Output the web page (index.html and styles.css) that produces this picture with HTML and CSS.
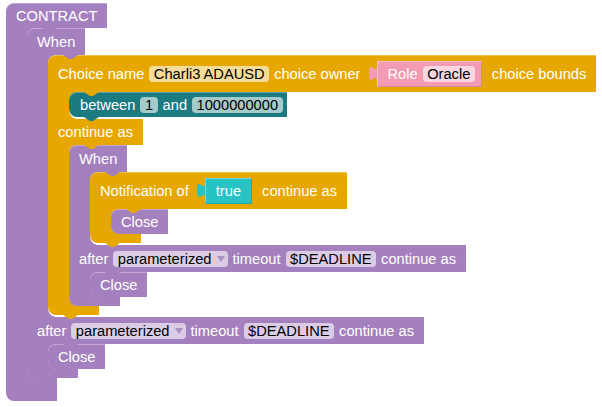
FILE: index.html
```html
<!DOCTYPE html>
<html>
<head>
<meta charset="utf-8">
<link rel="stylesheet" href="styles.css">
</head>
<body>
<svg class="grid" width="602" height="407"><defs><pattern id="g" width="20" height="20" patternUnits="userSpaceOnUse"><path d="M6 2.5h3M7.5 1v3" stroke="#cfcfcf" stroke-width="1"/></pattern></defs><rect width="602" height="407" fill="url(#g)"/></svg>
<div class="ws">
 <div class="blk purple">
  <div class="row head hat"><span>CONTRACT</span></div>
  <div class="stmt">
   <div class="arm"></div>
   <div class="blk purple sb">
    <div class="row head when"><span>When</span></div>
    <div class="stmt">
     <div class="arm"></div>
     <div class="blk yellow sb nx">
      <div class="row head tall">
       <span>Choice name</span><span class="fld">Charli3 ADAUSD</span><span>choice owner</span>
       <span class="val role"><svg class="tab" width="8" height="15" viewBox="0 0 8 15"><path d="M8 0C8 10 0 -8 0 7.5C0 23 8 5 8 15Z"/></svg><span>Role</span><span class="fld">Oracle</span></span>
       <span>choice bounds</span>
      </div>
      <div class="stmt">
       <div class="arm"></div>
       <div class="blk teal sb nx">
        <div class="row head one bnd"><span>between</span><span class="fld">1</span><span>and</span><span class="fld">1000000000</span></div>
       </div>
      </div>
      <div class="row cont"><span>continue as</span></div>
      <div class="stmt">
       <div class="arm"></div>
       <div class="blk purple sb">
        <div class="row head when"><span>When</span></div>
        <div class="stmt">
         <div class="arm"></div>
         <div class="blk yellow sb nx">
          <div class="row head tall">
           <span>Notification of</span>
           <span class="val bool"><svg class="tab" width="8" height="15" viewBox="0 0 8 15"><path d="M8 0C8 10 0 -8 0 7.5C0 23 8 5 8 15Z"/></svg><span>true</span></span>
           <span>continue as</span>
          </div>
          <div class="stmt">
           <div class="arm"></div>
           <div class="blk purple sb"><div class="row head one close"><span>Close</span></div></div>
          </div>
          <div class="foot"></div>
         </div>
        </div>
        <div class="row after"><span>after</span><span class="fld dd">parameterized<svg class="arr" width="8" height="6" viewBox="0 0 8 6"><path d="M0 0H8L4 6Z"/></svg></span><span>timeout</span><span class="fld">$DEADLINE</span><span>continue as</span></div>
        <div class="stmt">
         <div class="arm"></div>
         <div class="blk purple sb"><div class="row head one close"><span>Close</span></div></div>
        </div>
        <div class="foot"></div>
       </div>
      </div>
      <div class="foot"></div>
     </div>
    </div>
    <div class="row after"><span>after</span><span class="fld dd">parameterized<svg class="arr" width="8" height="6" viewBox="0 0 8 6"><path d="M0 0H8L4 6Z"/></svg></span><span>timeout</span><span class="fld">$DEADLINE</span><span>continue as</span></div>
    <div class="stmt">
     <div class="arm"></div>
     <div class="blk purple sb"><div class="row head one close"><span>Close</span></div></div>
    </div>
    <div class="foot"></div>
   </div>
  </div>
  <div class="foot big"></div>
 </div>
</div>
</body>
</html>
```

FILE: styles.css
```css
* { box-sizing: border-box; }
html, body { margin: 0; padding: 0; background: #fff; }
body {
  width: 602px; height: 407px; overflow: hidden; position: relative;
  font-family: "Liberation Sans", Arial, sans-serif; font-size: 14.67px;
}
.grid { position: absolute; left: 0; top: 0; z-index: -1; }
.ws { padding: 3px 0 0 6px; }

.purple { --c: #a580be; }
.yellow { --c: #e6a800; }
.teal { --c: #1c7b81; }

.blk { display: flex; flex-direction: column; align-items: flex-start; position: relative; flex-shrink: 0; }
.row {
  display: flex; align-items: center; gap: 5px; flex-shrink: 0;
  background: var(--c); color: #fff; height: 26px; padding: 0 10px;
  white-space: nowrap; position: relative;
}
.head { border-top-left-radius: 8px; box-shadow: inset 0 1px 0 rgba(255,255,255,.3); }
.hat { height: 25px; }
.when { height: 27px; }
.tall { height: 37px; }
.after { height: 27px; }
.one { height: 25px; border-bottom-left-radius: 8px; }
.bnd { padding: 0 4px 0 11px; }

.stmt { display: flex; align-items: flex-start; --pc: var(--c); flex-shrink: 0; }
.arm { width: 21px; align-self: stretch; background: var(--c); flex-shrink: 0; position: relative; }
.arm::before, .arm::after {
  content: ""; position: absolute; left: 21px; width: 8px; height: 8px;
}
.arm::before { top: 0; background: radial-gradient(circle at 100% 100%, transparent 7.5px, var(--c) 8px); }
.arm::after { bottom: 0; background: radial-gradient(circle at 100% 0, transparent 7.5px, var(--c) 8px); }
.foot { width: 51px; height: 9px; background: var(--c); border-bottom-left-radius: 8px; }
.big { height: 23px; }

.sb > .head::before {
  content: ""; position: absolute; left: 15px; top: 0; width: 15px; height: 4px;
  background: var(--pc); clip-path: polygon(0 0, 100% 0, 9px 100%, 6px 100%); z-index: 1;
}
.nx { margin-bottom: 2px; }
.nx::after {
  content: ""; position: absolute; left: 15px; bottom: -4px; width: 15px; height: 4px;
  background: var(--c); clip-path: polygon(0 0, 100% 0, 9px 100%, 6px 100%); z-index: 2;
}

.fld {
  display: flex; align-items: center; height: 16px; padding: 0 4.5px;
  border-radius: 4px; background: rgba(255,255,255,.6); color: #000;
}
.dd { padding-right: 3px; }
.arr { margin-left: 5px; fill: #a992c2; }

.val {
  display: flex; align-items: center; gap: 5px; height: 26px; position: relative;
  margin: 0 5px 0 11px; background: var(--c);
  box-shadow: inset 1px 1px 0 rgba(255,255,255,.35), inset -1px -1px 0 rgba(0,0,0,.12);
}
.role { --c: #f29bb2; padding: 0 7px 0 11px; }
.bool { --c: #26c2c4; padding: 0 11px; }
.tab { position: absolute; left: -8px; top: 5px; fill: var(--c); }
```
